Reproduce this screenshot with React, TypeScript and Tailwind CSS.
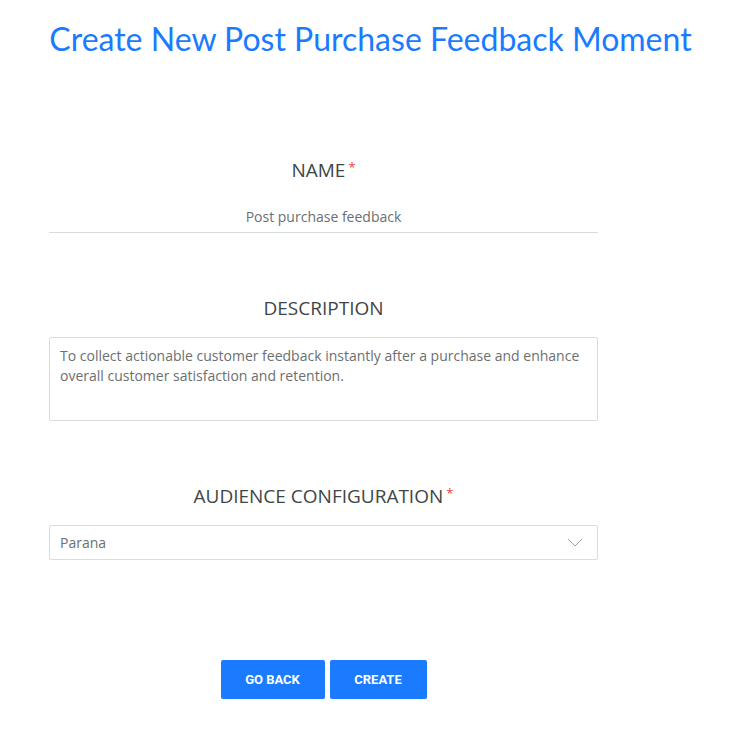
import React from "react";

const Star = () => <span className="text-[#f04134] text-[13px] align-top relative top-[-2px] ml-[3px]">*</span>;

export default function App() {
  return (
    <div className="w-[741px] h-[737px] bg-white" style={{ fontFamily: '"Open Sans", sans-serif' }}>
      <div className="pt-[20px] h-[60px] flex justify-center">
        <h1 className="text-[32px] leading-[38px] text-[#1a7bff]" style={{ fontFamily: 'Lato, sans-serif' }}>
          Create New Post Purchase Feedback Moment
        </h1>
      </div>
      <div className="ml-[49px] w-[549px] flex flex-col">
        <div className="mt-[97px] h-[26px] flex justify-center items-center text-[19px] text-[#3f4547]">
          <span>NAME</span><Star />
        </div>
        <div className="mt-[18px] h-[32px] border-b border-[#d5dcdd] flex items-center justify-center text-[14px] text-[#6b6f70]">
          Post purchase feedback
        </div>
        <div className="mt-[62px] h-[26px] flex justify-center items-center text-[19px] text-[#3f4547]">
          DESCRIPTION
        </div>
        <div className="mt-[16px] h-[84px] border border-[#d9dcdd] rounded-[2px] px-[10px] pt-[8px] text-[14px] leading-[20px] text-[#6b6f70]">
          To collect actionable customer feedback instantly after a purchase and enhance overall customer satisfaction and retention.
        </div>
        <div className="mt-[62px] h-[26px] flex justify-center items-center text-[19px] text-[#3f4547]">
          <span>AUDIENCE CONFIGURATION</span><Star />
        </div>
        <div className="mt-[16px] h-[35px] border border-[#d9dcdd] rounded-[2px] pl-[10px] pr-[14px] flex items-center justify-between text-[14px] text-[#6b6f70]">
          <span>Parana</span>
          <svg width="16" height="9" viewBox="0 0 16 9" fill="none">
            <path d="M1 1 L8 8 L15 1" stroke="#9aa0a3" strokeWidth="1" />
          </svg>
        </div>
        <div className="mt-[100px] flex justify-center gap-[5px]" style={{ fontFamily: 'Roboto, sans-serif' }}>
          <button className="w-[104px] h-[39px] bg-[#1a7bff] text-white text-[13px] font-bold rounded-[2px]">GO BACK</button>
          <button className="w-[97px] h-[39px] bg-[#1a7bff] text-white text-[13px] font-bold rounded-[2px]">CREATE</button>
        </div>
      </div>
    </div>
  );
}
